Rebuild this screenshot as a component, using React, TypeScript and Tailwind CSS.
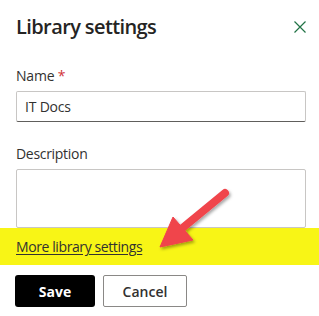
export default function App() {
  return (
    <div
      className="relative w-[319px] h-[316px] overflow-hidden bg-white text-[#323130]"
      style={{ fontFamily: '"Open Sans", "Liberation Sans", sans-serif' }}
    >
      {/* Header */}
      <div className="flex items-center justify-between pl-4 pr-[7px] pt-[8px] h-[46px]">
        <h1 className="text-[20px] leading-[28px] font-semibold text-[#252423] tracking-[-0.6px]">
          Library settings
        </h1>
        <button className="w-6 h-6 flex items-center justify-center text-[#217346]">
          <svg width="12" height="12" viewBox="0 0 12 12" fill="none">
            <path d="M0.5 0.5L11.5 11.5M11.5 0.5L0.5 11.5" stroke="currentColor" strokeWidth="1.2" />
          </svg>
        </button>
      </div>

      {/* Form */}
      <div className="px-4 pt-[19px]">
        <label className="block text-[14px] leading-[22px] text-[#323130] tracking-[-0.2px]">
          Name <span className="text-[#d13438]">*</span>
        </label>
        <div className="mt-[4px] h-[31px] w-[290px] border border-[#c8c6c4] border-b-[#605e5c] rounded-[2px] flex items-center px-2 text-[14px] text-[#323130] tracking-[-0.2px]">
          IT Docs
        </div>

        <label className="block mt-[21px] text-[14px] leading-[22px] text-[#323130] tracking-[-0.3px]">
          Description
        </label>
        <div className="mt-[4px] h-[59px] w-[290px] border border-[#c8c6c4] rounded-[2px]" />
      </div>

      {/* Highlighted link */}
      <div className="bg-[#f8f516] h-[37px] px-4 flex items-center">
        <a className="text-[14px] underline underline-offset-2 text-[#323130] tracking-[-0.4px]">More library settings</a>
      </div>

      {/* Footer buttons */}
      <div className="flex gap-2 px-[15px] pt-[10px]">
        <button className="w-[80px] h-[32px] bg-black text-white text-[14px] font-bold rounded-[3px]">
          Save
        </button>
        <button className="w-[84px] h-[32px] bg-white border border-[#8a8886] text-[#323130] text-[14px] font-semibold rounded-[2px]">
          Cancel
        </button>
      </div>

      {/* Annotation arrow */}
      <svg className="absolute left-0 top-0 pointer-events-none" width="319" height="316" viewBox="0 0 319 316">
        <defs>
          <filter id="sh" x="-20%" y="-20%" width="140%" height="140%">
            <feDropShadow dx="1.5" dy="2" stdDeviation="1.5" floodColor="#000" floodOpacity="0.35" />
          </filter>
        </defs>
        <g filter="url(#sh)" fill="#f0444c" stroke="#f0444c">
          <line x1="225" y1="193" x2="180" y2="230" strokeWidth="8" strokeLinecap="round" />
          <polygon points="160,247 173,217 193,240" strokeWidth="1" strokeLinejoin="round" />
        </g>
      </svg>
    </div>
  );
}
